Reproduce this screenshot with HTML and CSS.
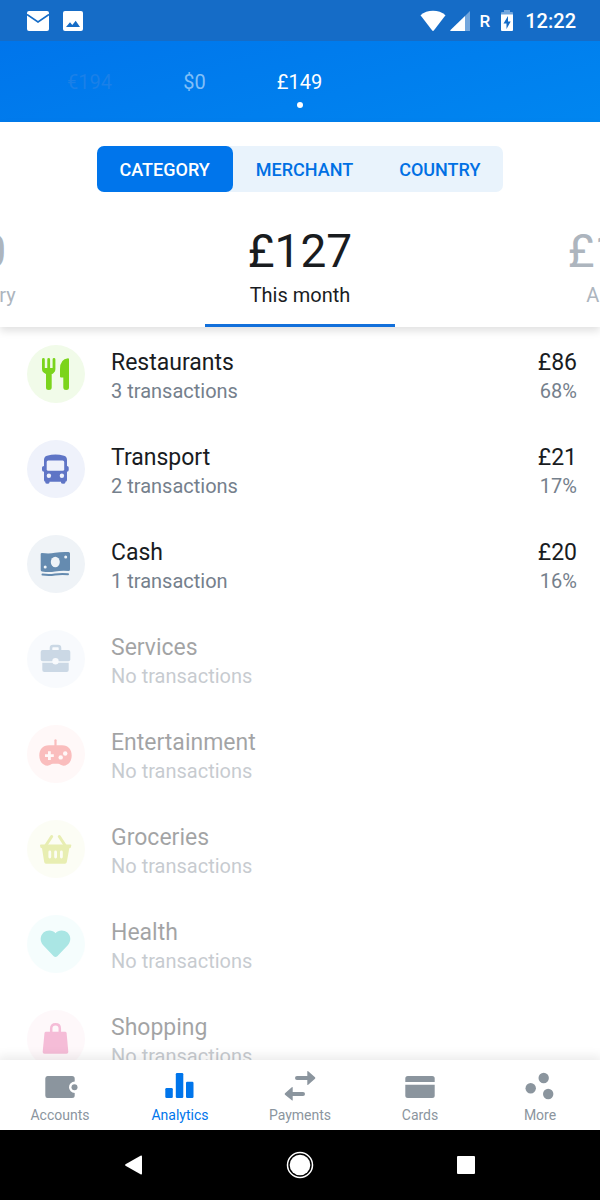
FILE: index.html
```html
<!DOCTYPE html>
<html lang="en">
<head>
    <meta charset="UTF-8">
    <meta name="viewport" content="width=device-width, initial-scale=1.0">
    <title>Analytics</title>
    <link rel="stylesheet" href="styles.css">
</head>
<body>
    <div class="status-bar">
        <svg width="22" height="20" viewBox="0 0 22 20">
            <rect width="22" height="20" rx="2" fill="#fff"/>
            <path d="M0 3.5L11 11L22 3.5" fill="none" stroke="#156cc7" stroke-width="1.6"/>
        </svg>
        <svg width="20" height="20" viewBox="0 0 20 20">
            <rect width="20" height="20" rx="2" fill="#fff"/>
            <path d="M3 16L7 11.3L9.3 14L12.7 9.7L17 16Z" fill="#156cc7"/>
        </svg>
        <div class="status-right">
            <svg width="26" height="22" viewBox="0 0 26 22">
                <path d="M.5 5.2C7 -.6 19 -.6 25.5 5.2L14 20.3Q13 21.5 12 20.3Z" fill="#fff"/>
            </svg>
            <svg width="20" height="22" viewBox="0 0 20 22">
                <path d="M15 6L20 1V21H15Z" fill="#fff" opacity=".4"/>
                <path d="M15 6V21H.5Q0 20.5 .5 20Z" fill="#fff"/>
            </svg>
            <span class="roaming">R</span>
            <svg width="14" height="22" viewBox="0 0 14 22">
                <path d="M1 5V3Q1 2 2 2H4V0H10V2H12Q13 2 13 3V5Z" fill="#fff" opacity=".4"/>
                <path d="M1 4.5H13V20Q13 21 12 21H2Q1 21 1 20Z" fill="#fff"/>
                <path d="M8 6L3.5 13.5H6.5V19L10.7 11.5H8Z" fill="#156cc7"/>
            </svg>
            <span class="clock">12:22</span>
        </div>
    </div>

    <header class="balances">
        <button class="balance far">€194</button>
        <button class="balance near">$0</button>
        <button class="balance current">£149</button>
    </header>

    <section class="summary">
        <div class="segments">
            <button class="segment selected">CATEGORY</button>
            <button class="segment">MERCHANT</button>
            <button class="segment">COUNTRY</button>
        </div>
        <div class="periods">
            <button class="period"><span class="total">£0</span><span class="month">January</span></button>
            <button class="period selected"><span class="total">£127</span><span class="month">This month</span></button>
            <button class="period"><span class="total">£149</span><span class="month">All time</span></button>
        </div>
    </section>

    <main class="categories">
        <div class="category">
            <div class="icon restaurants">
                <svg viewBox="0 0 58 58">
                    <path d="M16.4 14.5V24Q16.4 27 20 27H23.5Q27 27 27 24V14.5M21.7 14.5V27" fill="none" stroke="currentColor" stroke-width="2.8" stroke-linecap="round"/>
                    <path d="M16 23H27.5Q27.5 29 24.7 29V42.5Q24.7 45 21.8 45T19 42.5V29Q16 28 16 23Z" fill="currentColor"/>
                    <path d="M33 31.5V24Q33 14 41 13.2Q42 13.2 42 14.2V42.5Q42 45 39.2 45T36.3 42.5V32.5H34Q33 32.5 33 31.5Z" fill="currentColor"/>
                </svg>
            </div>
            <div class="details"><span class="name">Restaurants</span><span class="note">3 transactions</span></div>
            <div class="details amount"><span class="name">£86</span><span class="note">68%</span></div>
        </div>
        <div class="category">
            <div class="icon transport">
                <svg viewBox="0 0 58 58">
                    <path d="M17 20Q17 16.5 20 15.7Q28.5 13.5 37 15.7Q40 16.5 40 20V26Q41.7 26 41.7 27.5V30Q41.7 31.7 40 31.7V40Q40 41.7 38.4 41.7V42.5Q38.4 43.7 36.2 43.7T34 42.5V41.7H22.5V42.5Q22.5 43.7 20.4 43.7T18.3 42.5V41.7Q17 41.7 17 40V31.7Q15 31.7 15 30V27.5Q15 26 17 26Z" fill="currentColor"/>
                    <rect class="cut" x="19.7" y="20.5" width="17.5" height="10.2" rx="1.5"/>
                    <circle class="cut" cx="21.9" cy="35.7" r="2.2"/>
                    <circle class="cut" cx="34.9" cy="35.7" r="2.2"/>
                </svg>
            </div>
            <div class="details"><span class="name">Transport</span><span class="note">2 transactions</span></div>
            <div class="details amount"><span class="name">£21</span><span class="note">17%</span></div>
        </div>
        <div class="category">
            <div class="icon cash">
                <svg viewBox="0 0 58 58">
                    <path d="M15 18Q22 19 28 17.8T41.5 17Q43 17 43 18.5V34.5Q43 36 41.5 36Q34 35.5 28 36.5T15 36.5Q13.7 36.3 13.7 35V19Q13.7 18 15 18Z" fill="currentColor"/>
                    <path d="M15.5 39.6Q22 40.5 28 39.5T41 39.2" fill="none" stroke="currentColor" stroke-width="2" stroke-linecap="round"/>
                    <ellipse class="cut" cx="28.3" cy="27" rx="4.5" ry="5.3"/>
                    <circle class="cut" cx="18.2" cy="32" r="1.5"/>
                    <circle class="cut" cx="38.7" cy="22" r="1.5"/>
                </svg>
            </div>
            <div class="details"><span class="name">Cash</span><span class="note">1 transaction</span></div>
            <div class="details amount"><span class="name">£20</span><span class="note">16%</span></div>
        </div>
        <div class="category empty">
            <div class="icon services">
                <svg viewBox="0 0 58 58">
                    <path d="M24 21V18Q24 16 26 16H31Q33 16 33 18V21" fill="none" stroke="currentColor" stroke-width="2.6"/>
                    <rect x="13.7" y="20" width="29.6" height="11.3" rx="2" fill="currentColor"/>
                    <path d="M15.3 32.7H41.7V40Q41.7 42 39.7 42H17.3Q15.3 42 15.3 40Z" fill="currentColor"/>
                    <circle class="cut" cx="28.5" cy="31.3" r="3.2"/>
                </svg>
            </div>
            <div class="details"><span class="name">Services</span><span class="note">No transactions</span></div>
        </div>
        <div class="category empty">
            <div class="icon entertainment">
                <svg viewBox="0 0 58 58">
                    <path d="M28.5 22V15.3" stroke="currentColor" stroke-width="2.2" stroke-linecap="round"/>
                    <path d="M22 20.3H35C41.5 20.3 44.7 25 44.7 30.5S41.5 40.5 36.5 40.7C34 40.7 33 38.8 31 38.8H26C24 38.8 23 40.7 20.5 40.7C15.5 40.5 12.3 36 12.3 30.5S15.5 20.3 22 20.3Z" fill="currentColor"/>
                    <path class="cut" d="M21 26.3H23.8V29.3H26.8V32.1H23.8V35.1H21V32.1H18V29.3H21Z"/>
                    <circle class="cut" cx="33.7" cy="32.4" r="2.2"/>
                    <circle class="cut" cx="38.2" cy="28.5" r="2.2"/>
                </svg>
            </div>
            <div class="details"><span class="name">Entertainment</span><span class="note">No transactions</span></div>
        </div>
        <div class="category empty">
            <div class="icon groceries">
                <svg viewBox="0 0 58 58">
                    <path d="M24.7 16.5L18.5 26M32.3 16.5L38.5 26" stroke="currentColor" stroke-width="3" stroke-linecap="round"/>
                    <path d="M14 24.5H43.5Q44.5 24.5 44.3 25.5L43.8 27.5Q43.5 28.3 42.3 28.3L39.8 42Q39.5 43.7 38 43.7H19Q17.5 43.7 17.2 42L15 28.3Q13.8 28.3 13.5 27.5L13 25.5Q13 24.5 14 24.5Z" fill="currentColor"/>
                    <path class="slots" d="M22.8 32V37M28.6 32V37M34.4 32V37"/>
                </svg>
            </div>
            <div class="details"><span class="name">Groceries</span><span class="note">No transactions</span></div>
        </div>
        <div class="category empty">
            <div class="icon health">
                <svg viewBox="0 0 58 58">
                    <path d="M28.5 18.2C31 14.8 37 14.5 40.5 17.5C44 21 44.3 26 41 30L30.3 41.2Q28.5 42.7 26.7 41.2L16 30C12.7 26 13 21 16.5 17.5C20 14.5 26 14.8 28.5 18.2Z" fill="currentColor"/>
                </svg>
            </div>
            <div class="details"><span class="name">Health</span><span class="note">No transactions</span></div>
        </div>
        <div class="category empty">
            <div class="icon shopping">
                <svg viewBox="0 0 58 58">
                    <path d="M24.2 23V18.5Q24.2 14.3 28.5 14.3T32.8 18.5V23" fill="none" stroke="currentColor" stroke-width="2.5"/>
                    <path d="M19 21.7H38Q39.4 21.7 39.6 23L41.3 41.7Q41.3 43.7 39.5 43.7H17.5Q15.6 43.7 15.7 41.7L17.5 23Q17.7 21.7 19 21.7Z" fill="currentColor"/>
                </svg>
            </div>
            <div class="details"><span class="name">Shopping</span><span class="note">No transactions</span></div>
        </div>
    </main>

    <nav class="tabs">
        <a class="tab" href="#accounts">
            <svg width="36" height="30" viewBox="0 0 36 30">
                <path d="M5.5 6H30Q32.7 6 32.7 8.5V11.6A5.7 5.7 0 0 0 32.7 23V25.5Q32.7 28 30 28H5.5Q3.3 28 3.3 25.5V8.5Q3.3 6 5.5 6Z" fill="currentColor"/>
                <circle cx="32.5" cy="17.3" r="3" fill="currentColor"/>
            </svg>
            Accounts
        </a>
        <a class="tab active" href="#analytics">
            <svg width="36" height="30" viewBox="0 0 36 30" fill="currentColor">
                <rect x="3.3" y="18" width="7.5" height="10" rx="1.2"/>
                <rect x="13.8" y="3" width="7.5" height="25" rx="1.2"/>
                <rect x="24" y="11.7" width="7.5" height="16.3" rx="1.2"/>
            </svg>
            Analytics
        </a>
        <a class="tab" href="#payments">
            <svg width="36" height="30" viewBox="0 0 36 30" fill="currentColor">
                <path d="M15 6H25.3V1.5Q25.3 .5 26.2 1.2L33 7.3Q33.7 8 33 8.7L26.2 14.8Q25.3 15.5 25.3 14.5V10H15Q13 10 13 8T15 6Z"/>
                <path d="M21 22H10.7V17.5Q10.7 16.5 9.8 17.2L3 23.3Q2.3 24 3 24.7L9.8 30.3Q10.7 31 10.7 30V26H21Q23 26 23 24T21 22Z"/>
            </svg>
            Payments
        </a>
        <a class="tab" href="#cards">
            <svg width="36" height="30" viewBox="0 0 36 30" fill="currentColor">
                <path d="M3.3 12V8.5Q3.3 6 5.8 6H30.2Q32.7 6 32.7 8.5V12Z"/>
                <path d="M3.3 14.7H32.7V25.5Q32.7 28 30.2 28H5.8Q3.3 28 3.3 25.5Z"/>
            </svg>
            Cards
        </a>
        <a class="tab" href="#more">
            <svg width="36" height="30" viewBox="0 0 36 30" fill="currentColor">
                <circle cx="21.7" cy="8" r="5.2"/>
                <circle cx="8.7" cy="18.3" r="5.2"/>
                <circle cx="26.2" cy="24" r="5.2"/>
            </svg>
            More
        </a>
    </nav>

    <div class="system-nav">
        <button aria-label="Back">
            <svg width="28" height="28" viewBox="0 0 28 28"><path d="M5.5 13.2L20.5 4.7Q22 4 22 5.5V22.5Q22 24 20.5 23.3L5.5 14.8Q4.5 14 5.5 13.2Z" fill="#fff"/></svg>
        </button>
        <button aria-label="Home">
            <svg width="28" height="28" viewBox="0 0 28 28"><circle cx="14" cy="14" r="12.5" fill="none" stroke="#fff" stroke-width="1.5"/><circle cx="14" cy="14" r="10.3" fill="#fff"/></svg>
        </button>
        <button aria-label="Recent apps">
            <svg width="28" height="28" viewBox="0 0 28 28"><rect x="5" y="5" width="18" height="18" rx="1" fill="#fff"/></svg>
        </button>
    </div>
</body>
</html>
```
FILE: styles.css
```css
* { box-sizing: border-box; }
body { font-family: Roboto, sans-serif; margin: 0; height: 100vh; display: flex; flex-direction: column; overflow: hidden; background: #fff; color: #191c1f; }
button { font: inherit; color: inherit; background: none; border: 0; padding: 0; }
svg { display: block; flex: none; }

.status-bar { display: flex; align-items: center; gap: 14px; height: 41px; padding: 0 24px 0 27px; background: #156cc7; color: #fff; flex: none; }
.status-right { display: flex; align-items: center; gap: 4px; margin-left: auto; font-size: 20px; font-weight: 500; line-height: 24px; }
.roaming { font-size: 17px; padding: 0 6px; }
.clock { margin-left: 7px; }

.balances { display: flex; justify-content: flex-end; height: 81px; padding-right: calc(50% - 52px); background: linear-gradient(165deg, #0075eb, #0086f0); color: #fff; flex: none; }
.balance { width: 105px; font-size: 20px; line-height: 24px; position: relative; }
.balance.near { color: #80bff8; }
.balance.far { color: #1a80e8; }
.balance.current::after { content: ""; position: absolute; left: 50%; bottom: 14px; width: 6px; height: 6px; margin-left: -3px; border-radius: 50%; background: #fff; }

.summary { position: relative; padding-top: 24px; background: #fff; box-shadow: 0 4px 8px rgba(0, 0, 0, .12); flex: none; }
.segments { display: flex; width: fit-content; margin: 0 auto; border-radius: 7px; background: #e9f3fc; }
.segment { height: 46px; padding: 0 23px; border-radius: 7px; color: #0070e4; font-size: 18px; font-weight: 500; }
.segment.selected { background: #0075eb; color: #fff; }
.periods { display: flex; justify-content: center; gap: 130px; margin-top: 30px; overflow: hidden; }
.period { display: flex; flex-direction: column; align-items: center; flex: none; width: 190px; height: 105px; border-bottom: 3px solid transparent; color: #adb5be; }
.period.selected { color: #191c1f; border-color: #1270db; }
.total { font-size: 46px; line-height: 58px; }
.month { font-size: 20px; line-height: 24px; margin-top: 3px; }

.categories { flex: 1; min-height: 0; overflow: hidden; }
.category { display: flex; align-items: flex-start; height: 95px; padding: 18px 23px 0 27px; }
.category.empty { opacity: .4; }
.icon { width: 58px; height: 58px; margin-right: 26px; border-radius: 50%; background: var(--tint); flex: none; }
.cut { fill: var(--tint); }
.slots { stroke: var(--tint); stroke-width: 2.8; stroke-linecap: round; }
.restaurants { color: #7bd41c; --tint: #f1fbe9; }
.transport { color: #5f75c6; --tint: #eff2fb; }
.cash { color: #658bb0; --tint: #eff3f7; }
.services { color: #7e9fc0; --tint: #eff5fb; }
.entertainment { color: #f45d5d; --tint: #ffeeee; }
.groceries { color: #c8d640; --tint: #fafbe8; }
.health { color: #2dc3bc; --tint: #e8fbfc; }
.shopping { color: #e85a9c; --tint: #fdeef5; }
.details { display: flex; flex-direction: column; padding-top: 3px; }
.amount { margin-left: auto; text-align: right; }
.name { font-size: 23px; line-height: 29px; }
.note { font-size: 20px; line-height: 29px; color: #75808c; }

.tabs { position: relative; display: flex; height: 70px; padding-top: 10px; background: #fff; box-shadow: 0 -2px 10px 2px rgba(0, 0, 0, .08); flex: none; }
.tab { display: flex; flex-direction: column; align-items: center; gap: 6px; flex: 1; color: #8b959e; font-size: 14px; line-height: 18px; text-decoration: none; }
.tab svg { overflow: visible; }
.tab.active { color: #0075eb; }

.system-nav { position: relative; display: flex; justify-content: center; height: 70px; background: #000; flex: none; }
.system-nav button { display: flex; align-items: center; justify-content: center; width: 166px; }
```
